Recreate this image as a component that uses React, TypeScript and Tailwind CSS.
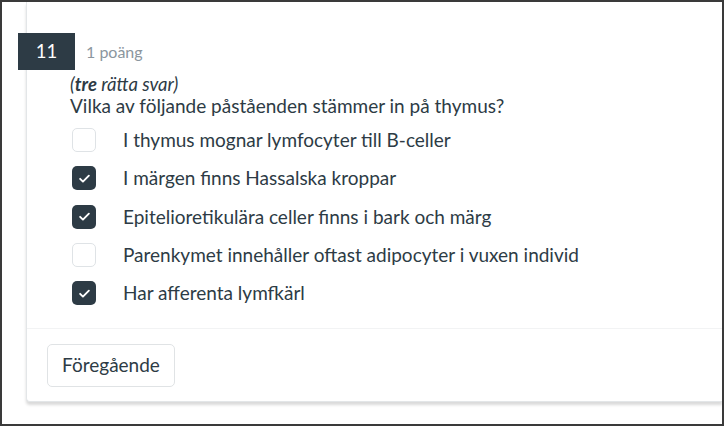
import React from 'react';

const answers = [
  { text: 'I thymus mognar lymfocyter till B-celler', checked: false },
  { text: 'I märgen finns Hassalska kroppar', checked: true },
  { text: 'Epitelioretikulära celler finns i bark och märg', checked: true },
  { text: 'Parenkymet innehåller oftast adipocyter i vuxen individ', checked: false },
  { text: 'Har afferenta lymfkärl', checked: true },
];

function Check({ checked }: { checked: boolean }) {
  if (!checked) {
    return <div className="w-[24px] h-[24px] rounded-[5px] border border-[#dfe3e6] bg-white shrink-0" />;
  }
  return (
    <div className="w-[24px] h-[24px] rounded-[5px] bg-[#2d3b45] flex items-center justify-center shrink-0">
      <svg width="15" height="15" viewBox="0 0 24 24" fill="none" stroke="white" strokeWidth="3" strokeLinecap="round" strokeLinejoin="round">
        <path d="M5 12.5l4.5 4.5L19 7.5" />
      </svg>
    </div>
  );
}

export default function App() {
  return (
    <div className="w-[724px] h-[426px] border-2 border-[#3a3a3a] bg-white overflow-hidden font-['Lato','Open_Sans',sans-serif] text-[#2d3b45]">
      <div className="ml-[24px] bg-white border-l border-b border-[#e3e6e8] rounded-bl-[4px] shadow-[0_3px_3px_rgba(0,0,0,0.15)] h-[400px] flex flex-col">
        {/* question header */}
        <div className="flex items-center mt-[31px] -ml-[9px]">
          <div className="w-[57px] h-[37px] bg-[#2d3b45] text-white text-[18.5px] flex items-center justify-center">11</div>
          <span className="ml-[11px] text-[16px] text-[#8b969e]">1 poäng</span>
        </div>

        <div className="pl-[43px] pt-[3px]">
          <div className="text-[18.5px] italic leading-[22px]">
            (<span className="font-bold">tre</span> rätta svar)
          </div>
          <div className="text-[19px] leading-[22px]">Vilka av följande påståenden stämmer in på thymus?</div>

          <div className="flex flex-col mt-[4px] pl-[2px]">
            {answers.map((a) => (
              <div key={a.text} className="flex items-center h-[38.3px]">
                <Check checked={a.checked} />
                <span className="ml-[27px] text-[19px] leading-[22px]">{a.text}</span>
              </div>
            ))}
          </div>
        </div>

        <div className="mt-auto border-t border-[#f2f3f4] pt-[15px] pb-[14px] pl-[20px]">
          <button className="h-[43px] px-[14px] rounded-[5px] border border-[#e0e3e5] bg-white text-[19px] text-[#2d3b45]">
            Föregående
          </button>
        </div>
      </div>
    </div>
  );
}
